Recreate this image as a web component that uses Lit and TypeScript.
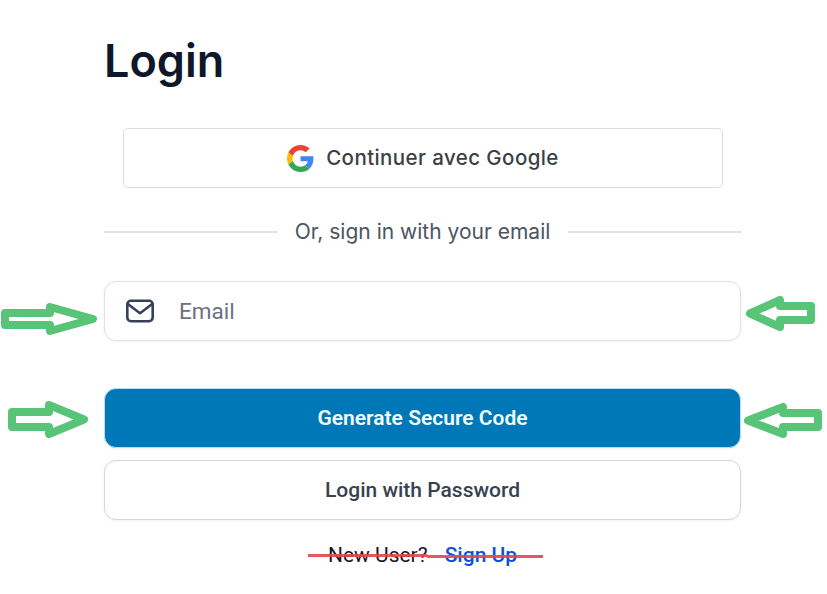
import { LitElement, html, css, svg } from "lit";
import { customElement } from "lit/decorators.js";

// Outline arrows that annotate the form, in page coordinates.
const ARROWS = [
  "M5 313H50V307L93 319L50 331V325H5Z",
  "M750 313.5L780 300V306H811V320H780V327Z",
  "M12 412H49V405L84 419.5L49 434V427H12Z",
  "M748 420.5L783 407V413H818V427H783V434Z",
];

@customElement("app-root")
export class AppRoot extends LitElement {
  static styles = css`
    :host {
      display: block;
      position: relative;
      width: 827px;
      height: 594px;
      overflow: hidden;
      background: #fff;
      font-family: Roboto, "Liberation Sans", sans-serif;
    }
    * { box-sizing: border-box; }
    .form {
      display: flex;
      flex-direction: column;
      width: 637px;
      margin-left: 104px;
      padding-top: 33px;
    }
    h1 {
      margin: 0;
      height: 56px;
      font: 600 45px/56px Inter, sans-serif;
      color: #0f172a;
      white-space: nowrap;
    }
    button { font: inherit; padding: 0; background: #fff; }
    .google {
      display: flex;
      align-items: center;
      justify-content: center;
      gap: 12px;
      width: 600px;
      height: 60px;
      margin: 39px 0 0 19px;
      border: 1px solid #dadce0;
      border-radius: 5px;
      font: 500 20.5px/28px Inter, sans-serif;
      letter-spacing: 0.41px;
      color: #3c4043;
    }
    .google svg { width: 27px; height: 27px; margin-top: 1px; }
    .divider {
      display: flex;
      align-items: center;
      gap: 18px;
      height: 30px;
      margin-top: 29px;
      font: 400 21px/30px Inter, sans-serif;
      color: #4b5563;
      white-space: nowrap;
    }
    .divider i { flex: 1; height: 2px; margin-top: -1px; background: #e0e1e3; }
    .field {
      display: flex;
      align-items: center;
      height: 60px;
      margin-top: 34px;
      padding-left: 20px;
      border: 1px solid #dfe0e3;
      border-radius: 12px;
      box-shadow: 0 1px 3px rgba(0, 0, 0, 0.06);
      font-size: 22.5px;
      color: #6b7280;
    }
    .field svg { width: 32px; height: 32px; margin-right: 22px; }
    .action {
      height: 60px;
      border: 1px solid #d4d6da;
      border-radius: 12px;
      font: 500 21px/30px Roboto, sans-serif;
      color: #374151;
      box-shadow: 0 1px 3px rgba(0, 0, 0, 0.05);
    }
    .primary {
      margin: 47px 0 12px;
      border-color: #b7dcef;
      background: #0077b6;
      color: #f0fbff;
      font-weight: 600;
    }
    .signup {
      display: flex;
      justify-content: center;
      gap: 17px;
      margin-top: 21px;
      font-size: 21px;
      line-height: 28px;
      color: #111827;
    }
    .signup b { font-weight: 500; color: #0f4fdc; }
    .marks { position: absolute; inset: 0; pointer-events: none; }
  `;

  render() {
    return html`
      <div class="form">
        <h1>Login</h1>
        <button class="google">
          <svg viewBox="0 0 48 48">
            <path fill="#EA4335" d="M24 9.5c3.54 0 6.71 1.22 9.21 3.6l6.85-6.85C35.9 2.38 30.47 0 24 0 14.62 0 6.51 5.38 2.56 13.22l7.98 6.19C12.43 13.72 17.74 9.5 24 9.5z"/>
            <path fill="#4285F4" d="M46.98 24.55c0-1.57-.15-3.09-.38-4.55H24v9.02h12.94c-.58 2.96-2.26 5.48-4.78 7.18l7.73 6c4.51-4.18 7.09-10.36 7.09-17.65z"/>
            <path fill="#FBBC05" d="M10.53 28.59c-.48-1.45-.76-2.99-.76-4.59s.27-3.14.76-4.59l-7.98-6.19C.92 16.46 0 20.12 0 24s.92 7.54 2.56 10.78l7.97-6.19z"/>
            <path fill="#34A853" d="M24 48c6.48 0 11.93-2.13 15.89-5.81l-7.73-6c-2.15 1.45-4.92 2.3-8.16 2.3-6.26 0-11.57-4.22-13.47-9.91l-7.98 6.19C6.51 42.62 14.62 48 24 48z"/>
          </svg>
          <span>Continuer avec Google</span>
        </button>
        <div class="divider"><i></i><span>Or, sign in with your email</span><i></i></div>
        <label class="field">
          <svg viewBox="0 0 32 32" fill="none" stroke="#374058" stroke-width="2.6" stroke-linecap="round" stroke-linejoin="round">
            <rect x="2.3" y="5.8" width="25.4" height="20.4" rx="3.6"/>
            <path d="M2.8 9L15 18.2L27.2 9"/>
          </svg>
          <span>Email</span>
        </label>
        <button class="action primary">Generate Secure Code</button>
        <button class="action">Login with Password</button>
        <div class="signup"><span>New User?</span><b>Sign Up</b></div>
      </div>
      <svg class="marks" width="827" height="594" fill="none">
        <g stroke="#58c478" stroke-width="8" stroke-linejoin="round">
          ${ARROWS.map((d) => svg`<path d=${d} />`)}
        </g>
        <path d="M308 555.5H426L428 556.5H543" stroke="#e0474c" stroke-opacity=".9" stroke-width="3"/>
      </svg>
    `;
  }
}
